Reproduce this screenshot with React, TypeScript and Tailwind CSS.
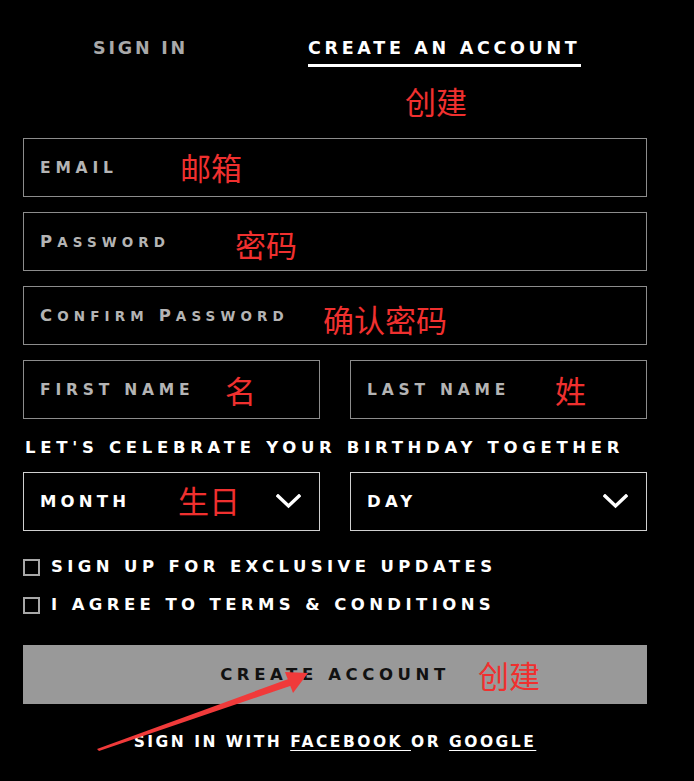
import React from "react";

const font = { fontFamily: '"DejaVu Sans", "Liberation Sans", Arial, sans-serif' };

function Note({ text, className }: { text: string; className: string }) {
  return (
    <span
      className={`absolute text-[31px] leading-none text-[#f0302f] font-['Noto_Sans_CJK_SC',sans-serif] ${className}`}
    >
      {text}
    </span>
  );
}

// hand-made small caps: first letter of each word bigger
function SmallCaps({ text }: { text: string }) {
  return (
    <>
      {text.split(" ").map((w, i) => (
        <React.Fragment key={i}>
          {i > 0 && <span className="text-[14px]"> </span>}
          <span className="text-[16.5px]">{w[0]}</span>
          <span className="text-[13.5px]">{w.slice(1).toUpperCase()}</span>
        </React.Fragment>
      ))}
    </>
  );
}

function Field({
  label,
  note,
  noteClass,
  smallCaps,
}: {
  label: string;
  note?: string;
  noteClass?: string;
  smallCaps?: boolean;
}) {
  return (
    <div className="relative flex h-[59px] items-center border border-[#8c8c8c] px-[16px]">
      {smallCaps ? (
        <span className="font-bold leading-[20px] tracking-[5.1px] text-[#b4b4b4]">
          <SmallCaps text={label} />
        </span>
      ) : (
        <span className="text-[15.5px] font-bold uppercase leading-[20px] tracking-[4.8px] text-[#b4b4b4]">{label}</span>
      )}
      {note && <Note text={note} className={noteClass ?? ""} />}
    </div>
  );
}

function Chevron() {
  return (
    <svg width="25" height="15" viewBox="0 0 25 15" className="shrink-0">
      <path d="M2 2 L12.5 12 L23 2" fill="none" stroke="#fff" strokeWidth="3.4" strokeLinecap="square" />
    </svg>
  );
}

function Select({ label, note }: { label: string; note?: string }) {
  return (
    <div className="relative flex h-[59px] items-center justify-between border border-[#d0d0d0] pl-[16px] pr-[18px]">
      <span className="text-[16.5px] font-bold leading-[20px] tracking-[4.2px] text-white">{label}</span>
      {note && <Note text={note} className="left-[154px] top-[11px]" />}
      <Chevron />
    </div>
  );
}

function Check({ label }: { label: string }) {
  return (
    <label className="flex h-[20px] items-center gap-[11px]">
      <span className="h-[17px] w-[17px] border-2 border-[#a8a8a8]" />
      <span className="text-[16.5px] font-bold leading-[20px] tracking-[4.4px] text-white">{label}</span>
    </label>
  );
}

export default function App() {
  return (
    <div className="relative min-h-[781px] w-[694px] bg-black" style={font}>
      {/* tabs */}
      <div className="flex items-start gap-[120px] pl-[93px] pt-[39px]">
        <span className="text-[17.5px] font-bold leading-[18px] tracking-[2.8px] text-[#a9a9a9]">SIGN IN</span>
        <span className="border-b-[3px] border-white pb-[7px] text-[17.5px] font-bold leading-[18px] tracking-[3.7px] text-white">
          CREATE AN ACCOUNT
        </span>
      </div>

      <div className="relative h-[71px]">
        <Note text="创建" className="left-[405px] top-[18px]" />
      </div>

      <div className="flex w-[647px] flex-col gap-[15px] pl-[23px]">
        <Field label="Email" note="邮箱" noteClass="left-[156px] top-[12px]" />
        <Field label="Password" smallCaps note="密码" noteClass="left-[211px] top-[15px]" />
        <Field label="Confirm Password" smallCaps note="确认密码" noteClass="left-[299px] top-[16px]" />
        <div className="grid grid-cols-[297px_297px] gap-[30px]">
          <Field label="First Name" note="名" noteClass="left-[201px] top-[13px]" />
          <Field label="Last Name" note="姓" noteClass="left-[204px] top-[13px]" />
        </div>
      </div>

      <div className="w-[647px] pl-[25px] pt-[19px]">
        <p className="text-[16.5px] font-bold leading-[20px] tracking-[4.7px] text-white">
          LET'S CELEBRATE YOUR BIRTHDAY TOGETHER
        </p>
      </div>

      <div className="grid w-[647px] grid-cols-[297px_297px] gap-[30px] pl-[23px] pt-[14px]">
        <Select label="MONTH" note="生日" />
        <Select label="DAY" />
      </div>

      <div className="flex flex-col gap-[18px] pl-[23px] pt-[26px]">
        <Check label="SIGN UP FOR EXCLUSIVE UPDATES" />
        <Check label="I AGREE TO TERMS & CONDITIONS" />
      </div>

      <div className="w-[647px] pl-[23px] pt-[30px]">
        <button className="relative flex h-[59px] w-full items-center justify-center bg-[#999999]">
          <span className="text-[16.5px] font-bold leading-[20px] tracking-[4.6px] text-[#111]">CREATE ACCOUNT</span>
          <Note text="创建" className="left-[455px] top-[14px]" />
        </button>
      </div>

      <p className="w-[670px] pt-[28px] text-center text-[15.5px] font-bold leading-[20px] tracking-[2.5px] text-white">
        SIGN IN WITH <span className="underline underline-offset-[3px]">FACEBOOK </span>OR{" "}
        <span className="underline underline-offset-[3px]">GOOGLE</span>
      </p>

      {/* annotation arrow */}
      <svg className="pointer-events-none absolute left-0 top-0" width="694" height="781" viewBox="0 0 694 781">
        <polygon points="97,749 294,677 296,684 99,751" fill="#f03a3a" />
        <polygon points="308,673 285,672 293,693" fill="#f03a3a" />
      </svg>
    </div>
  );
}
